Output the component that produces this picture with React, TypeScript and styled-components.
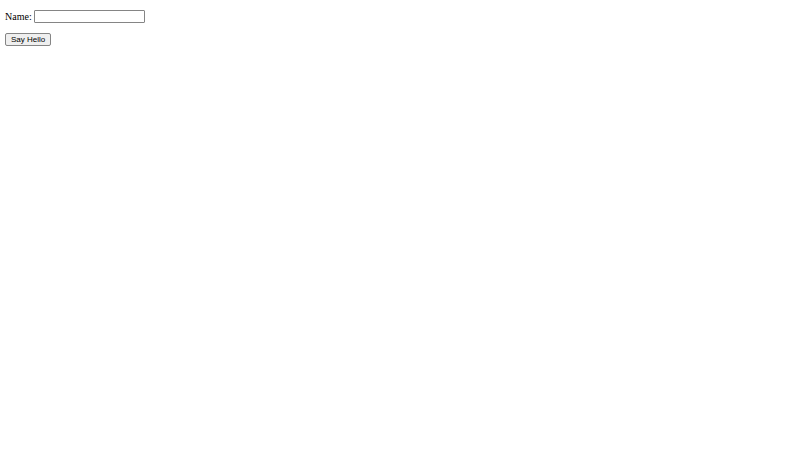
import React, { useState } from 'react';
import styled, { createGlobalStyle } from 'styled-components';

const GlobalStyle = createGlobalStyle`
    body {
        margin: 0;
        background: #ffffff;
        color: #000000;
        font-family: 'Liberation Serif', 'Times New Roman', serif;
        font-size: 10px;
        line-height: 13px;
    }
`;

const Form = styled.form`
    display: flex;
    flex-direction: column;
    align-items: flex-start;
    gap: 10px;
    padding: 10px 5px;
`;

const Field = styled.div`
    display: flex;
    align-items: center;
    gap: 2px;
`;

const Label = styled.label`
    color: #000000;
`;

const Input = styled.input`
    box-sizing: border-box;
    width: 111px;
    height: 13px;
    padding: 0 2px;
    border: 1px solid #858585;
    border-radius: 1px;
    background: #ffffff;
    font-family: 'Liberation Sans', Arial, sans-serif;
    font-size: 8px;
`;

const Button = styled.button`
    box-sizing: border-box;
    height: 13px;
    padding: 0 5px;
    border: 1px solid #858585;
    border-radius: 2px;
    background: #efefef;
    color: #000000;
    font-family: 'Liberation Sans', Arial, sans-serif;
    font-size: 8px;
    line-height: 11px;
`;

export default () => {
    const [name, setName] = useState('');

    return (
        <>
            <GlobalStyle />
            <Form onSubmit={event => event.preventDefault()}>
                <Field>
                    <Label htmlFor="name">Name:</Label>
                    <Input
                        id="name"
                        type="text"
                        value={name}
                        onChange={event => setName(event.target.value)}
                    />
                </Field>
                <Button type="submit">Say Hello</Button>
            </Form>
        </>
    );
};
